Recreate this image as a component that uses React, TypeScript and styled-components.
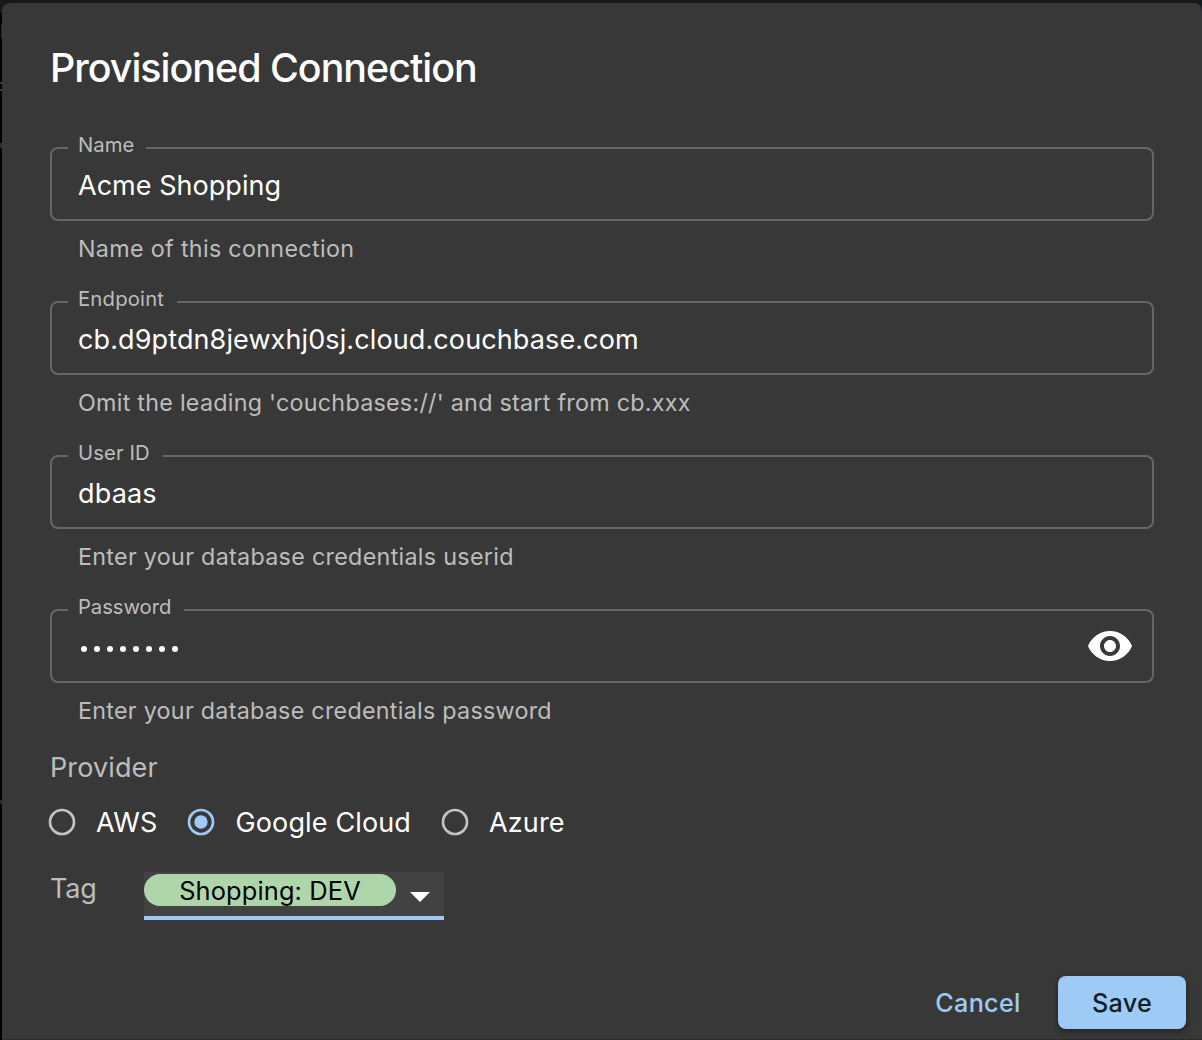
import React, { useState } from "react";
import styled, { createGlobalStyle } from "styled-components";

const GlobalStyle = createGlobalStyle`
  *, *::before, *::after { box-sizing: border-box; }
  body { margin: 0; background: #14191b; overflow: hidden; }
`;

const Backdrop = styled.div`
  height: 1040px;
  padding: 3px 0 0 2px;
  font-family: Inter, "Liberation Sans", sans-serif;
  font-weight: 400;
  background:
    linear-gradient(#2a2a2a, #2a2a2a) 1px 24px / 1px 14px no-repeat,
    linear-gradient(#3a3a3a, #3a3a3a) 0 82px / 2px 2px no-repeat,
    linear-gradient(#3a3a3a, #3a3a3a) 0 89px / 2px 2px no-repeat,
    linear-gradient(#2e2e2e, #2e2e2e) 0 143px / 2px 5px no-repeat,
    linear-gradient(#2a2a2a, #2a2a2a) 0 800px / 2px 4px no-repeat,
    linear-gradient(#14191b 0 12px, #020202 14px);
`;

const Dialog = styled.div`
  display: flex;
  flex-direction: column;
  height: 1037px;
  padding: 0 16px 10px 48px;
  background: #383838;
  border-radius: 8px 8px 0 0;
  border-bottom: 1px solid #30292b;
  color: #fff;
`;

const Title = styled.h2`
  margin: 33px 0 35px;
  font-size: 39.4px;
  line-height: 64px;
  font-weight: 500;
  letter-spacing: -1px;
  white-space: nowrap;
`;

const Fields = styled.div`
  display: flex;
  flex-direction: column;
  margin-right: 32px;
`;

const Field = styled.div`
  height: 154px;
`;

const Outline = styled.fieldset`
  display: flex;
  align-items: center;
  justify-content: space-between;
  height: 86px;
  min-width: 0;
  margin: 0;
  padding: 0 18px 0 26px;
  border: 2px solid #666;
  border-radius: 8px;
`;

const Notch = styled.legend<{ $width: number; $spacing: number }>`
  width: ${(p) => p.$width}px;
  height: 26px;
  margin-left: -10px;
  padding: 0 0 7px 10px;
  font-size: 20.3px;
  line-height: 19px;
  letter-spacing: ${(p) => p.$spacing}px;
  color: #bdbdbd;
  white-space: nowrap;
`;

const Input = styled.input<{ $spacing: number }>`
  flex: 1;
  min-width: 0;
  height: 46px;
  margin-bottom: 8px;
  padding: 0;
  border: 0;
  outline: 0;
  background: transparent;
  color: #fff;
  font: 400 27px/46px Inter, "Liberation Sans", sans-serif;
  letter-spacing: ${(p) => p.$spacing}px;
`;

const Mask = styled.div`
  display: flex;
  gap: 7px;
  padding: 0 0 7px 3px;
`;

const Dot = styled.span`
  width: 6px;
  height: 6px;
  border-radius: 50%;
  background: #fff;
`;

const IconButton = styled.button`
  display: flex;
  margin-bottom: 13px;
  padding: 0;
  border: 0;
  background: none;
  color: #fff;
`;

const Helper = styled.p<{ $spacing: number }>`
  margin: 7px 0 0 28px;
  font-size: 23.3px;
  line-height: 41px;
  letter-spacing: ${(p) => p.$spacing}px;
  color: #bdbdbd;
  white-space: nowrap;
`;

const GroupLabel = styled.div`
  margin-top: -3px;
  font-size: 27px;
  line-height: 40px;
  letter-spacing: 0.12px;
  color: #bdbdbd;
`;

const Radios = styled.div`
  display: flex;
  gap: 28px;
  height: 48px;
  margin: 10px 0 0 -4px;
`;

const Radio = styled.button`
  display: flex;
  align-items: center;
  gap: 18px;
  padding: 0;
  border: 0;
  background: none;
  color: #fff;
  font: 400 27px/46px Inter, "Liberation Sans", sans-serif;
  letter-spacing: 0.14px;
  white-space: nowrap;
`;

const RadioLabel = styled.span`
  padding-top: 2px;
`;

const TagRow = styled.div`
  display: flex;
  align-items: flex-start;
  margin-top: 26px;
`;

const TagLabel = styled.span`
  width: 94px;
  font-size: 27px;
  line-height: 34px;
  letter-spacing: -0.15px;
  color: #bdbdbd;
`;

const TagSelect = styled.div`
  display: flex;
  width: 300px;
  height: 48px;
  background: #424242;
  border-bottom: 4px solid #a0caf5;
`;

const Chip = styled.span`
  width: 252px;
  height: 32px;
  margin-top: 2px;
  border-radius: 16px;
  background: #afd5ab;
  color: #000;
  font-size: 25.4px;
  line-height: 34px;
  letter-spacing: 0.14px;
  text-align: center;
  white-space: nowrap;
`;

const Actions = styled.div`
  display: flex;
  justify-content: flex-end;
  gap: 22px;
  margin-top: auto;
`;

const Button = styled.button<{ $filled?: boolean }>`
  width: ${(p) => (p.$filled ? 128 : 116)}px;
  height: 53px;
  padding: 0;
  border: 0;
  border-radius: 8px;
  background: ${(p) => (p.$filled ? "#9ecaf6" : "transparent")};
  box-shadow: ${(p) =>
    p.$filled ? "0 3px 5px rgba(0,0,0,0.28), 0 2px 8px rgba(0,0,0,0.12)" : "none"};
  color: ${(p) => (p.$filled ? "#111e29" : "#9ecaf6")};
  font: 500 25.2px/54px Inter, "Liberation Sans", sans-serif;
  letter-spacing: 0.3px;
`;

const EyeIcon = () => (
  <svg width="48" height="48" viewBox="0 0 24 24" fill="currentColor">
    <path d="M12 4.5C7 4.5 2.73 7.61 1 12c1.73 4.39 6 7.5 11 7.5s9.27-3.11 11-7.5c-1.73-4.39-6-7.5-11-7.5zM12 17c-2.76 0-5-2.24-5-5s2.24-5 5-5 5 2.24 5 5-2.24 5-5 5zm0-8c-1.66 0-3 1.34-3 3s1.34 3 3 3 3-1.34 3-3-1.34-3-3-3z" />
  </svg>
);

const RadioIcon = ({ checked }: { checked: boolean }) => (
  <svg width="32" height="32" viewBox="0 0 24 24">
    <circle cx="12" cy="12" r="9" fill="none" strokeWidth="2" stroke={checked ? "#a0caf5" : "#c3c3c3"} />
    {checked && <circle cx="12" cy="12" r="5" fill="#a0caf5" />}
  </svg>
);

const ArrowIcon = () => (
  <svg width="48" height="48" viewBox="0 0 24 24" fill="#fff">
    <path d="M7 10l5 5 5-5z" />
  </svg>
);

const fields = [
  {
    label: "Name",
    notch: 78,
    labelSpacing: 0.05,
    value: "Acme Shopping",
    spacing: 0.03,
    help: "Name of this connection",
    helpSpacing: 0.32,
  },
  {
    label: "Endpoint",
    notch: 109,
    labelSpacing: 0.18,
    value: "cb.d9ptdn8jewxhj0sj.cloud.couchbase.com",
    spacing: 0.11,
    help: "Omit the leading 'couchbases://' and start from cb.xxx",
    helpSpacing: 0.26,
  },
  {
    label: "User ID",
    notch: 95,
    labelSpacing: 0.1,
    value: "dbaas",
    spacing: 0.15,
    help: "Enter your database credentials userid",
    helpSpacing: 0.3,
  },
];

const providers = ["AWS", "Google Cloud", "Azure"];

export default function App() {
  const [provider, setProvider] = useState("Google Cloud");
  return (
    <>
      <GlobalStyle />
      <Backdrop>
        <Dialog role="dialog">
          <Title>Provisioned Connection</Title>
          <Fields>
            {fields.map((f) => (
              <Field key={f.label}>
                <Outline>
                  <Notch $width={f.notch} $spacing={f.labelSpacing}>
                    {f.label}
                  </Notch>
                  <Input $spacing={f.spacing} defaultValue={f.value} spellCheck={false} />
                </Outline>
                <Helper $spacing={f.helpSpacing}>{f.help}</Helper>
              </Field>
            ))}
            <Field>
              <Outline>
                <Notch $width={116} $spacing={-0.08}>
                  Password
                </Notch>
                <Mask>
                  {Array.from({ length: 8 }, (_, i) => (
                    <Dot key={i} />
                  ))}
                </Mask>
                <IconButton aria-label="Show password">
                  <EyeIcon />
                </IconButton>
              </Outline>
              <Helper $spacing={0.27}>Enter your database credentials password</Helper>
            </Field>
          </Fields>
          <GroupLabel>Provider</GroupLabel>
          <Radios>
            {providers.map((name) => (
              <Radio key={name} onClick={() => setProvider(name)}>
                <RadioIcon checked={provider === name} />
                <RadioLabel>{name}</RadioLabel>
              </Radio>
            ))}
          </Radios>
          <TagRow>
            <TagLabel>Tag</TagLabel>
            <TagSelect>
              <Chip>Shopping: DEV</Chip>
              <ArrowIcon />
            </TagSelect>
          </TagRow>
          <Actions>
            <Button>Cancel</Button>
            <Button $filled>Save</Button>
          </Actions>
        </Dialog>
      </Backdrop>
    </>
  );
}
